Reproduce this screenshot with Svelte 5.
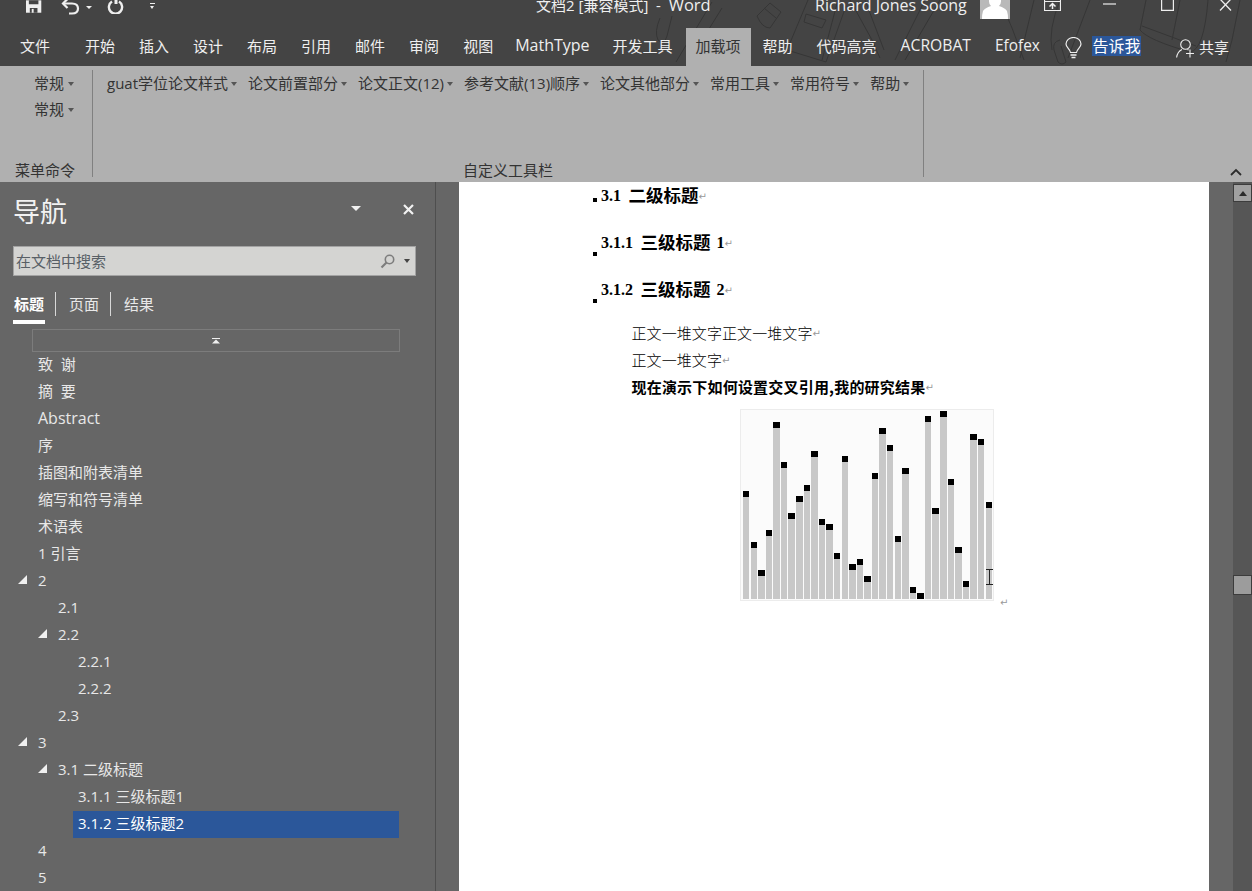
<script lang="ts">
  const tabs = [
    { label: '开始' }, { label: '插入' }, { label: '设计' }, { label: '布局' }, { label: '引用' },
    { label: '邮件' }, { label: '审阅' }, { label: '视图' }, { label: 'MathType', latin: true, tight: true }, { label: '开发工具' },
    { label: '加载项', active: true }, { label: '帮助' }, { label: '代码高亮' }, { label: 'ACROBAT', latin: true }, { label: 'Efofex', latin: true, small: true },
  ];

  const toolbar = ['guat学位论文样式', '论文前置部分', '论文正文(12)', '参考文献(13)顺序', '论文其他部分', '常用工具', '常用符号', '帮助'];

  const tree = [
    { text: '致  谢', level: 0 },
    { text: '摘  要', level: 0 },
    { text: 'Abstract', level: 0, latin: true },
    { text: '序', level: 0 },
    { text: '插图和附表清单', level: 0 },
    { text: '缩写和符号清单', level: 0 },
    { text: '术语表', level: 0 },
    { text: '1 引言', level: 0 },
    { text: '2', level: 0, open: true },
    { text: '2.1', level: 1 },
    { text: '2.2', level: 1, open: true },
    { text: '2.2.1', level: 2 },
    { text: '2.2.2', level: 2 },
    { text: '2.3', level: 1 },
    { text: '3', level: 0, open: true },
    { text: '3.1 二级标题', level: 1, open: true },
    { text: '3.1.1 三级标题1', level: 2 },
    { text: '3.1.2 三级标题2', level: 2, selected: true },
    { text: '4', level: 0 },
    { text: '5', level: 0 },
  ];

  // bar tops, in px above the chart baseline
  const bars = [105, 54, 26, 66, 174, 134, 83, 100, 111, 145, 77, 72, 43, 140, 32, 37, 20, 123, 168, 151, 60, 128, 9, 3, 180, 88, 185, 117, 49, 15, 162, 157, 94];
</script>

<div class="app">
  <header class="top">
    <svg class="doodles" width="1252" height="66" viewBox="0 0 1252 66" fill="none" stroke="#363636" stroke-width="1">
      <path d="M676 62 L712 2 M686 66 L722 8 M660 18 q-6 14 -2 22 q6 6 9 -4 l5 -20" />
      <path d="M757 16 L770 3 L781 12 L770 28 Q762 28 757 16Z M764 8 L776 18" />
      <path d="M808 0 L787 50 L826 62 L846 6 M838 0 L822 60 M806 14 L826 20 L822 28 L804 22Z" />
      <path d="M850 0 L872 40 L880 58 M865 0 L884 50 M925 0 L895 60 M940 0 L905 60" />
      <path d="M1000 0 L1012 28 L1024 60 M1034 0 L1020 58 M1090 0 L1068 58 M1060 0 Q1048 30 1052 50" />
      <path d="M1146 0 L1140 30 Q1148 40 1190 52 Q1204 50 1208 0 M1142 26 L1196 46 M1180 0 L1172 40" />
      <path d="M1060 40 q-8 2 -6 10 l4 12 q4 4 8 0 l-5 -16" />
      <path d="M1240 0 L1232 40 L1226 62" />
    </svg>

    <div class="titlebar">
      <div class="qat">
        <svg class="i-save" width="17" height="14" viewBox="0 0 17 14">
          <path fill="#efefef" d="M0 0H16V13H0Z" />
          <path fill="#444" d="M3 0H13V4H3Z M4 8H12V13H4Z" />
          <path fill="#efefef" d="M6 9H8V13H6Z" />
        </svg>
        <svg class="i-undo" width="19" height="15" viewBox="0 0 19 15" fill="none" stroke="#efefef" stroke-width="2.2">
          <path d="M2 3.5H11Q17 3.5 17 8.5T11 13.5H8" />
          <path d="M6.5 -1L2 3.5L6.5 8" />
        </svg>
        <span class="caret light small"></span>
        <svg class="i-redo" width="17" height="14" viewBox="0 0 17 14" fill="none" stroke="#efefef" stroke-width="2.4">
          <path d="M5 1.5A6.6 6.6 0 1 0 12 1.5" />
          <path d="M9 -1V4" stroke-width="3" />
        </svg>
        <span class="qat-more"></span>
      </div>
      <div class="doc-title">文档2 [兼容模式]&nbsp; -&nbsp; <span class="word">Word</span></div>
      <div class="user">Richard Jones Soong</div>
      <div class="avatar">
        <svg width="30" height="19" viewBox="0 0 30 19">
          <path fill="#fff" d="M15 -6a6.5 7 0 0 1 4 12q6 2 8 5 1 3 1 8H2q0-5 1-8 2-3 8-5a6.5 7 0 0 1 4-12Z" />
        </svg>
      </div>
      <svg class="i-ribbon" width="17" height="11" viewBox="0 0 17 11" fill="none" stroke="#efefef">
        <path d="M.5 -1V10.5H16.5V-1M.5 1.5H16.5" stroke-width="1.2" />
        <path d="M8.5 9V4M5.5 6.5L8.5 3.5L11.5 6.5" stroke-width="1.5" />
      </svg>
      <svg class="i-min" width="13" height="5" viewBox="0 0 13 5"><path d="M0 4H13" stroke="#efefef" stroke-width="1.2" /></svg>
      <svg class="i-max" width="13" height="11" viewBox="0 0 13 11" fill="none"><path d="M.6 -1V10.4H12.4V-1" stroke="#efefef" stroke-width="1.2" /></svg>
      <svg class="i-close" width="13" height="11" viewBox="0 0 13 11" fill="none"><path d="M1 -1L12 10.5M12 -1L1 10.5" stroke="#efefef" stroke-width="1.3" /></svg>
    </div>

    <nav class="tabs">
      <span class="tab file">文件</span>
      {#each tabs as t}
        <span class="tab" class:active={t.active} class:latin={t.latin} class:tight={t.tight} class:small={t.small}>{t.label}</span>
      {/each}
      <svg class="i-bulb" width="17" height="22" viewBox="0 0 17 22" fill="none" stroke="#efefef" stroke-width="1.2">
        <path d="M5.5 15.5C5 12 1 10.5 1 7a7.5 6.5 0 0 1 15 0c0 3.500-4 5-4.500 8.500Z" />
        <path d="M5.500 18H11.500M6.500 20.500H10.500" stroke-width="1.6" />
      </svg>
      <span class="tell">告诉我</span>
      <svg class="i-share" width="19" height="19" viewBox="0 0 19 19" fill="none" stroke="#efefef" stroke-width="1.1">
        <circle cx="9.500" cy="5.500" r="4.800" />
        <path d="M.6 18.500Q1.500 12.500 6 10.500M11.500 10.500L12.500 11M14 10.500V18.500M10 14.500H18" />
      </svg>
      <span class="share">共享</span>
    </nav>
  </header>

  <section class="ribbon">
    <div class="group menu-group">
      <div class="group-body stacked">
        <span class="tool">常规<i class="caret dark"></i></span>
        <span class="tool">常规<i class="caret dark"></i></span>
      </div>
      <div class="group-label">菜单命令</div>
    </div>
    <div class="group toolbar-group">
      <div class="group-body inline">
        {#each toolbar as label}
          <span class="tool">{label}<i class="caret dark"></i></span>
        {/each}
      </div>
      <div class="group-label">自定义工具栏</div>
    </div>
    <svg class="collapse" width="12" height="8" viewBox="0 0 12 8" fill="none"><path d="M1 7L6 2L11 7" stroke="#2c2c2c" stroke-width="1.800" /></svg>
  </section>

  <main class="workspace">
    <aside class="nav">
      <div class="nav-head">
        <h1>导航</h1>
        <span class="nav-menu"></span>
        <svg class="nav-close" width="11" height="11" viewBox="0 0 11 11"><path d="M1 1L10 10M10 1L1 10" stroke="#f2f2f2" stroke-width="2.200" /></svg>
      </div>
      <div class="search">
        <span class="placeholder">在文档中搜索</span>
        <svg width="15" height="15" viewBox="0 0 15 15" fill="none" stroke="#7d7d7d">
          <circle cx="9.500" cy="5.500" r="4.200" stroke-width="1.600" />
          <path d="M6.500 8.500L1.500 13.500" stroke-width="2.200" />
        </svg>
        <i class="caret search-caret"></i>
      </div>
      <div class="nav-tabs">
        <span class="nav-tab current">标题</span>
        <span class="nav-tab">页面</span>
        <span class="nav-tab">结果</span>
      </div>
      <div class="scroll-top">
        <svg width="8" height="6" viewBox="0 0 8 6"><path fill="#f0f0f0" d="M0 0H8V1H0ZM4 1.500L8 5.500H0Z" /></svg>
      </div>
      <ul class="tree">
        {#each tree as node}
          <li class="node lv{node.level}" class:selected={node.selected}>
            <span class="twisty">{#if node.open}<svg width="9" height="9" viewBox="0 0 9 9"><path fill="#f0f0f0" d="M9 0V9H0Z" /></svg>{/if}</span>
            <span class="node-text" class:latin={node.latin}>{node.text}</span>
          </li>
        {/each}
      </ul>
    </aside>

    <div class="doc-area">
      <article class="page">
        <h2 class="head h-first"><i class="mark"></i>3.1 <span class="cjk">二级标题</span><span class="ret">↵</span></h2>
        <h3 class="head h-low"><i class="mark"></i>3.1.1 <span class="cjk">三级标题</span><span class="tail">1</span><span class="ret">↵</span></h3>
        <h3 class="head h-low"><i class="mark"></i>3.1.2 <span class="cjk">三级标题</span><span class="tail">2</span><span class="ret">↵</span></h3>
        <p class="para first">正文一堆文字正文一堆文字<span class="ret">↵</span></p>
        <p class="para">正文一堆文字<span class="ret">↵</span></p>
        <p class="para strong">现在演示下如何设置交叉引用,我的研究结果<span class="ret">↵</span></p>
        <div class="figure">
          <div class="chart">
            {#each bars as h}
              <div class="bar" style:height="{h}px"></div>
            {/each}
            <svg class="ibeam" width="7" height="16" viewBox="0 0 7 16" fill="none" stroke="#222"><path d="M0 .5H7M0 15.500H7M3.500 0V16" /></svg>
          </div>
          <span class="ret fig-ret">↵</span>
        </div>
      </article>
      <div class="scroll-gutter">
        <div class="scrollbar">
          <button class="sb-up" aria-label="向上滚动"><span></span></button>
          <div class="sb-thumb"></div>
        </div>
      </div>
    </div>
  </main>
</div>

<style>
  :global(body) {
    margin: 0;
    background: #666;
  }

  .app {
    width: 1252px;
    height: 891px;
    overflow: hidden;
    display: flex;
    flex-direction: column;
    font-family: "Open Sans", "Noto Sans CJK SC", sans-serif;
    font-size: 15px;
  }

  .top {
    position: relative;
    height: 66px;
    background: #444;
    color: #efefef;
    flex: none;
    overflow: hidden;
  }

  .doodles {
    position: absolute;
    left: 0;
    top: 0;
  }

  .titlebar {
    position: relative;
    height: 28px;
    display: flex;
    align-items: flex-start;
    overflow: hidden;
  }

  .qat {
    display: flex;
    align-items: flex-start;
    padding-left: 26px;
    width: 155px;
    box-sizing: border-box;
    flex: none;
  }

  .i-undo { margin-left: 19px; flex: none; }
  .caret.small { margin: 6px 0 0 6px; border-width: 3px 3px 0; }
  .i-redo { margin-left: 15px; flex: none; }

  .qat-more {
    margin: 3px 0 0 26px;
    width: 5px;
    height: 1px;
    background: #efefef;
    position: relative;
  }

  .qat-more::after {
    content: '';
    position: absolute;
    top: 3px;
    left: 0;
    border: solid transparent;
    border-width: 3px 2.500px 0;
    border-top-color: #efefef;
  }

  .doc-title {
    margin-left: 381px;
    width: 279px;
    line-height: 10px;
    white-space: nowrap;
    flex: none;
  }

  .word { font-size: 16.500px; }

  .user {
    line-height: 10px;
    white-space: nowrap;
    width: 165px;
    flex: none;
    font-size: 16px;
  }

  .avatar {
    width: 30px;
    height: 19px;
    background: #b9b9b9;
    flex: none;
  }

  .i-ribbon { margin-left: 34px; flex: none; }
  .i-min { margin-left: 42px; flex: none; }
  .i-max { margin-left: 45px; flex: none; }
  .i-close { margin-left: 45px; flex: none; }

  .tabs {
    position: relative;
    height: 38px;
    display: flex;
    align-items: stretch;
  }

  .tab {
    padding: 0 12px;
    display: flex;
    align-items: center;
    padding-bottom: 4px;
    box-sizing: border-box;
    white-space: nowrap;
  }

  .tab.latin { font-size: 15.700px; }
  .tab.small { font-size: 15.400px; }
  .tab.tight { font-size: 16px; margin-left: -2px; margin-right: -1px; }

  .tab.file {
    margin-left: 8px;
    margin-right: 11px;
  }

  .tab.active {
    background: #b0b0b0;
    color: #333;
    padding: 0 10px 4px;
    margin: 0 0 0 1px;
  }

  .i-bulb {
    margin: 9px 0 0 13px;
    flex: none;
  }

  .tell {
    margin: 8px 0 0 10px;
    height: 20px;
    line-height: 20px;
    padding: 0 0.500px;
    background: #2b579a;
    color: #fff;
    font-size: 16px;
  }

  .i-share {
    margin: 11px 0 0 35px;
    flex: none;
  }

  .share {
    margin: 9px 0 0 4px;
    line-height: 20px;
    height: 20px;
  }

  .ribbon {
    position: relative;
    height: 116px;
    flex: none;
    display: flex;
    background: #b0b0b0;
    color: #333;
  }

  .group {
    display: flex;
    flex-direction: column;
    height: 107px;
    margin-top: 4px;
    border-right: 1px solid #808080;
    box-sizing: border-box;
    flex: none;
  }

  .menu-group { width: 93px; }
  .menu-group .group-label { padding-right: 2px; }
  .toolbar-group { width: 831px; }

  .group-body {
    flex: 1;
    display: flex;
  }

  .stacked {
    flex-direction: column;
    align-items: flex-end;
    padding: 3px 18px 0 0;
    gap: 6px;
  }

  .stacked .caret.dark { margin-left: 4px; }

  .inline {
    padding: 3px 0 0 14px;
    gap: 11px;
  }

  .tool {
    height: 20px;
    line-height: 20px;
    white-space: nowrap;
    display: flex;
    align-items: center;
  }

  .group-label {
    text-align: center;
    font-size: 15px;
    line-height: 20px;
    margin-bottom: -3px;
  }

  .caret {
    display: inline-block;
    width: 0;
    height: 0;
    border-style: solid;
    border-width: 4px 3.500px 0;
    border-color: #555 transparent transparent;
    flex: none;
  }

  .caret.dark { margin: 1px 0 0 3px; }
  .caret.light { border-top-color: #efefef; }

  .collapse {
    position: absolute;
    right: 10px;
    bottom: 6px;
  }

  .workspace {
    flex: 1;
    display: flex;
    min-height: 0;
    background: #666;
  }

  .nav {
    width: 436px;
    flex: none;
    box-sizing: border-box;
    border-right: 1px solid #4e4e4e;
    color: #e8e8e8;
    overflow: hidden;
  }

  .nav-head {
    display: flex;
    align-items: center;
    height: 64px;
    padding-left: 13px;
  }

  .nav-head h1 {
    margin: 0;
    font-size: 27px;
    font-weight: 400;
    color: #f2f2f2;
    width: 338px;
    flex: none;
    padding-bottom: 8px;
  }

  .nav-menu {
    width: 0;
    height: 0;
    border: solid transparent;
    border-width: 5px 5.500px 0;
    border-top-color: #f0f0f0;
    margin-bottom: 11px;
  }

  .nav-close {
    margin: 0 0 10px 42px;
  }

  .search {
    margin-left: 13px;
    width: 403px;
    height: 30px;
    box-sizing: border-box;
    background: #d4d4d2;
    border: 1px solid #a3a3a3;
    display: flex;
    align-items: center;
    padding: 0 5px 0 2px;
  }

  .placeholder {
    flex: 1;
    color: #585f66;
    margin-bottom: 2px;
  }

  .search-caret {
    margin-left: 9px;
    border-top-color: #444;
  }

  .nav-tabs {
    display: flex;
    margin: 16px 0 0 13px;
    height: 32px;
  }

  .nav-tab {
    padding: 0 11px 0 13px;
    line-height: 24px;
    height: 24px;
    border-right: 1px solid #d8d8d8;
  }

  .nav-tab:last-child { border-right: 0; }

  .nav-tab.current {
    padding: 0 11px 0 1px;
    font-weight: 700;
    color: #fff;
    position: relative;
  }

  .nav-tab.current::after {
    content: '';
    position: absolute;
    left: 0;
    top: 28px;
    width: 32px;
    height: 4px;
    background: #fff;
  }

  .scroll-top {
    margin: 5px 0 0 32px;
    width: 368px;
    height: 23px;
    box-sizing: border-box;
    border: 1px solid #7c7c7c;
    display: flex;
    align-items: center;
    justify-content: center;
  }

  .tree {
    list-style: none;
    margin: 0;
    padding: 0;
  }

  .node {
    height: 27px;
    display: flex;
    align-items: center;
    box-sizing: border-box;
    white-space: nowrap;
    width: 399px;
    padding-bottom: 4px;
  }

  .node-text {
    white-space: pre;
  }

  .node-text.latin { font-size: 16px; }

  .twisty {
    width: 20px;
    margin-left: 18px;
    flex: none;
    display: flex;
    align-items: center;
  }

  .node.lv1 .twisty { margin-left: 38px; }
  .node.lv2 .twisty { margin-left: 58px; }

  .node.selected {
    background: linear-gradient(90deg, transparent 73px, #2b579a 73px);
    color: #fff;
  }

  .doc-area {
    flex: 1;
    display: flex;
    min-width: 0;
    padding-left: 23px;
  }

  .page {
    position: relative;
    width: 750px;
    flex: none;
    background: #fff;
    box-sizing: border-box;
    padding-left: 134px;
    color: #000;
    font-family: "Liberation Serif", "Noto Sans CJK SC", serif;
    overflow: hidden;
  }

  .head {
    margin: 0;
    font-size: 16px;
    font-weight: 700;
    line-height: 22px;
    display: flex;
    align-items: center;
    white-space: pre;
  }

  .cjk {
    font-size: 17.500px;
    margin-left: 3.500px;
  }

  .tail { margin-left: 6px; }

  .h-first { margin-top: 2.500px; }
  .h-low { margin-top: 25px; }

  .mark {
    width: 4px;
    height: 4px;
    background: #000;
    margin-right: 4px;
    flex: none;
    align-self: flex-end;
    margin-bottom: 5px;
  }

  .h-low .mark { margin-bottom: -2px; }

  .ret {
    color: #999;
    font-size: 10px;
    font-weight: 400;
    font-family: "DejaVu Sans", sans-serif;
    line-height: 1;
    margin-top: 3px;
  }

  .para {
    margin: 0 0 0 38.500px;
    font-size: 15px;
    line-height: 27px;
    display: flex;
    align-items: center;
    white-space: pre;
    font-family: "Noto Sans CJK SC", sans-serif;
    font-weight: 300;
    letter-spacing: 0.080px;
  }

  .para.first { margin-top: 18px; }
  .para.strong { font-weight: 700; letter-spacing: 0.200px; }

  .figure {
    display: flex;
    margin: 9.500px 0 0 147px;
    align-items: flex-end;
  }

  .chart {
    position: relative;
    width: 254px;
    height: 192px;
    box-sizing: border-box;
    background: #fbfbfb;
    border: 1px solid #ececec;
    display: flex;
    align-items: flex-end;
    gap: 1.100px;
    padding: 0 1px 1px 2px;
  }

  .bar {
    flex: 1;
    background: #c8c8c8;
    position: relative;
  }

  .bar::before {
    content: '';
    position: absolute;
    left: 0;
    right: 0;
    top: -3px;
    height: 6px;
    background: #000;
  }

  .ibeam {
    position: absolute;
    right: 0;
    bottom: 15px;
  }

  .fig-ret {
    margin: 0 0 -7px 6px;
  }

  .scroll-gutter {
    flex: 1;
    display: flex;
    justify-content: flex-end;
  }

  .scrollbar {
    width: 19px;
    background: #565656;
    padding-top: 2px;
    box-sizing: border-box;
    display: flex;
    flex-direction: column;
  }

  .sb-up {
    width: 19px;
    height: 18px;
    padding: 0;
    background: #a0a0a0;
    border: 1px solid #3c3c3c;
    display: flex;
    align-items: center;
    justify-content: center;
  }

  .sb-up span {
    width: 0;
    height: 0;
    border: solid transparent;
    border-width: 0 4.500px 5px;
    border-bottom-color: #2a2a2a;
  }

  .sb-thumb {
    margin-top: 373px;
    height: 20px;
    background: #9c9c9c;
    border: 1px solid #3c3c3c;
    box-sizing: border-box;
  }
</style>
